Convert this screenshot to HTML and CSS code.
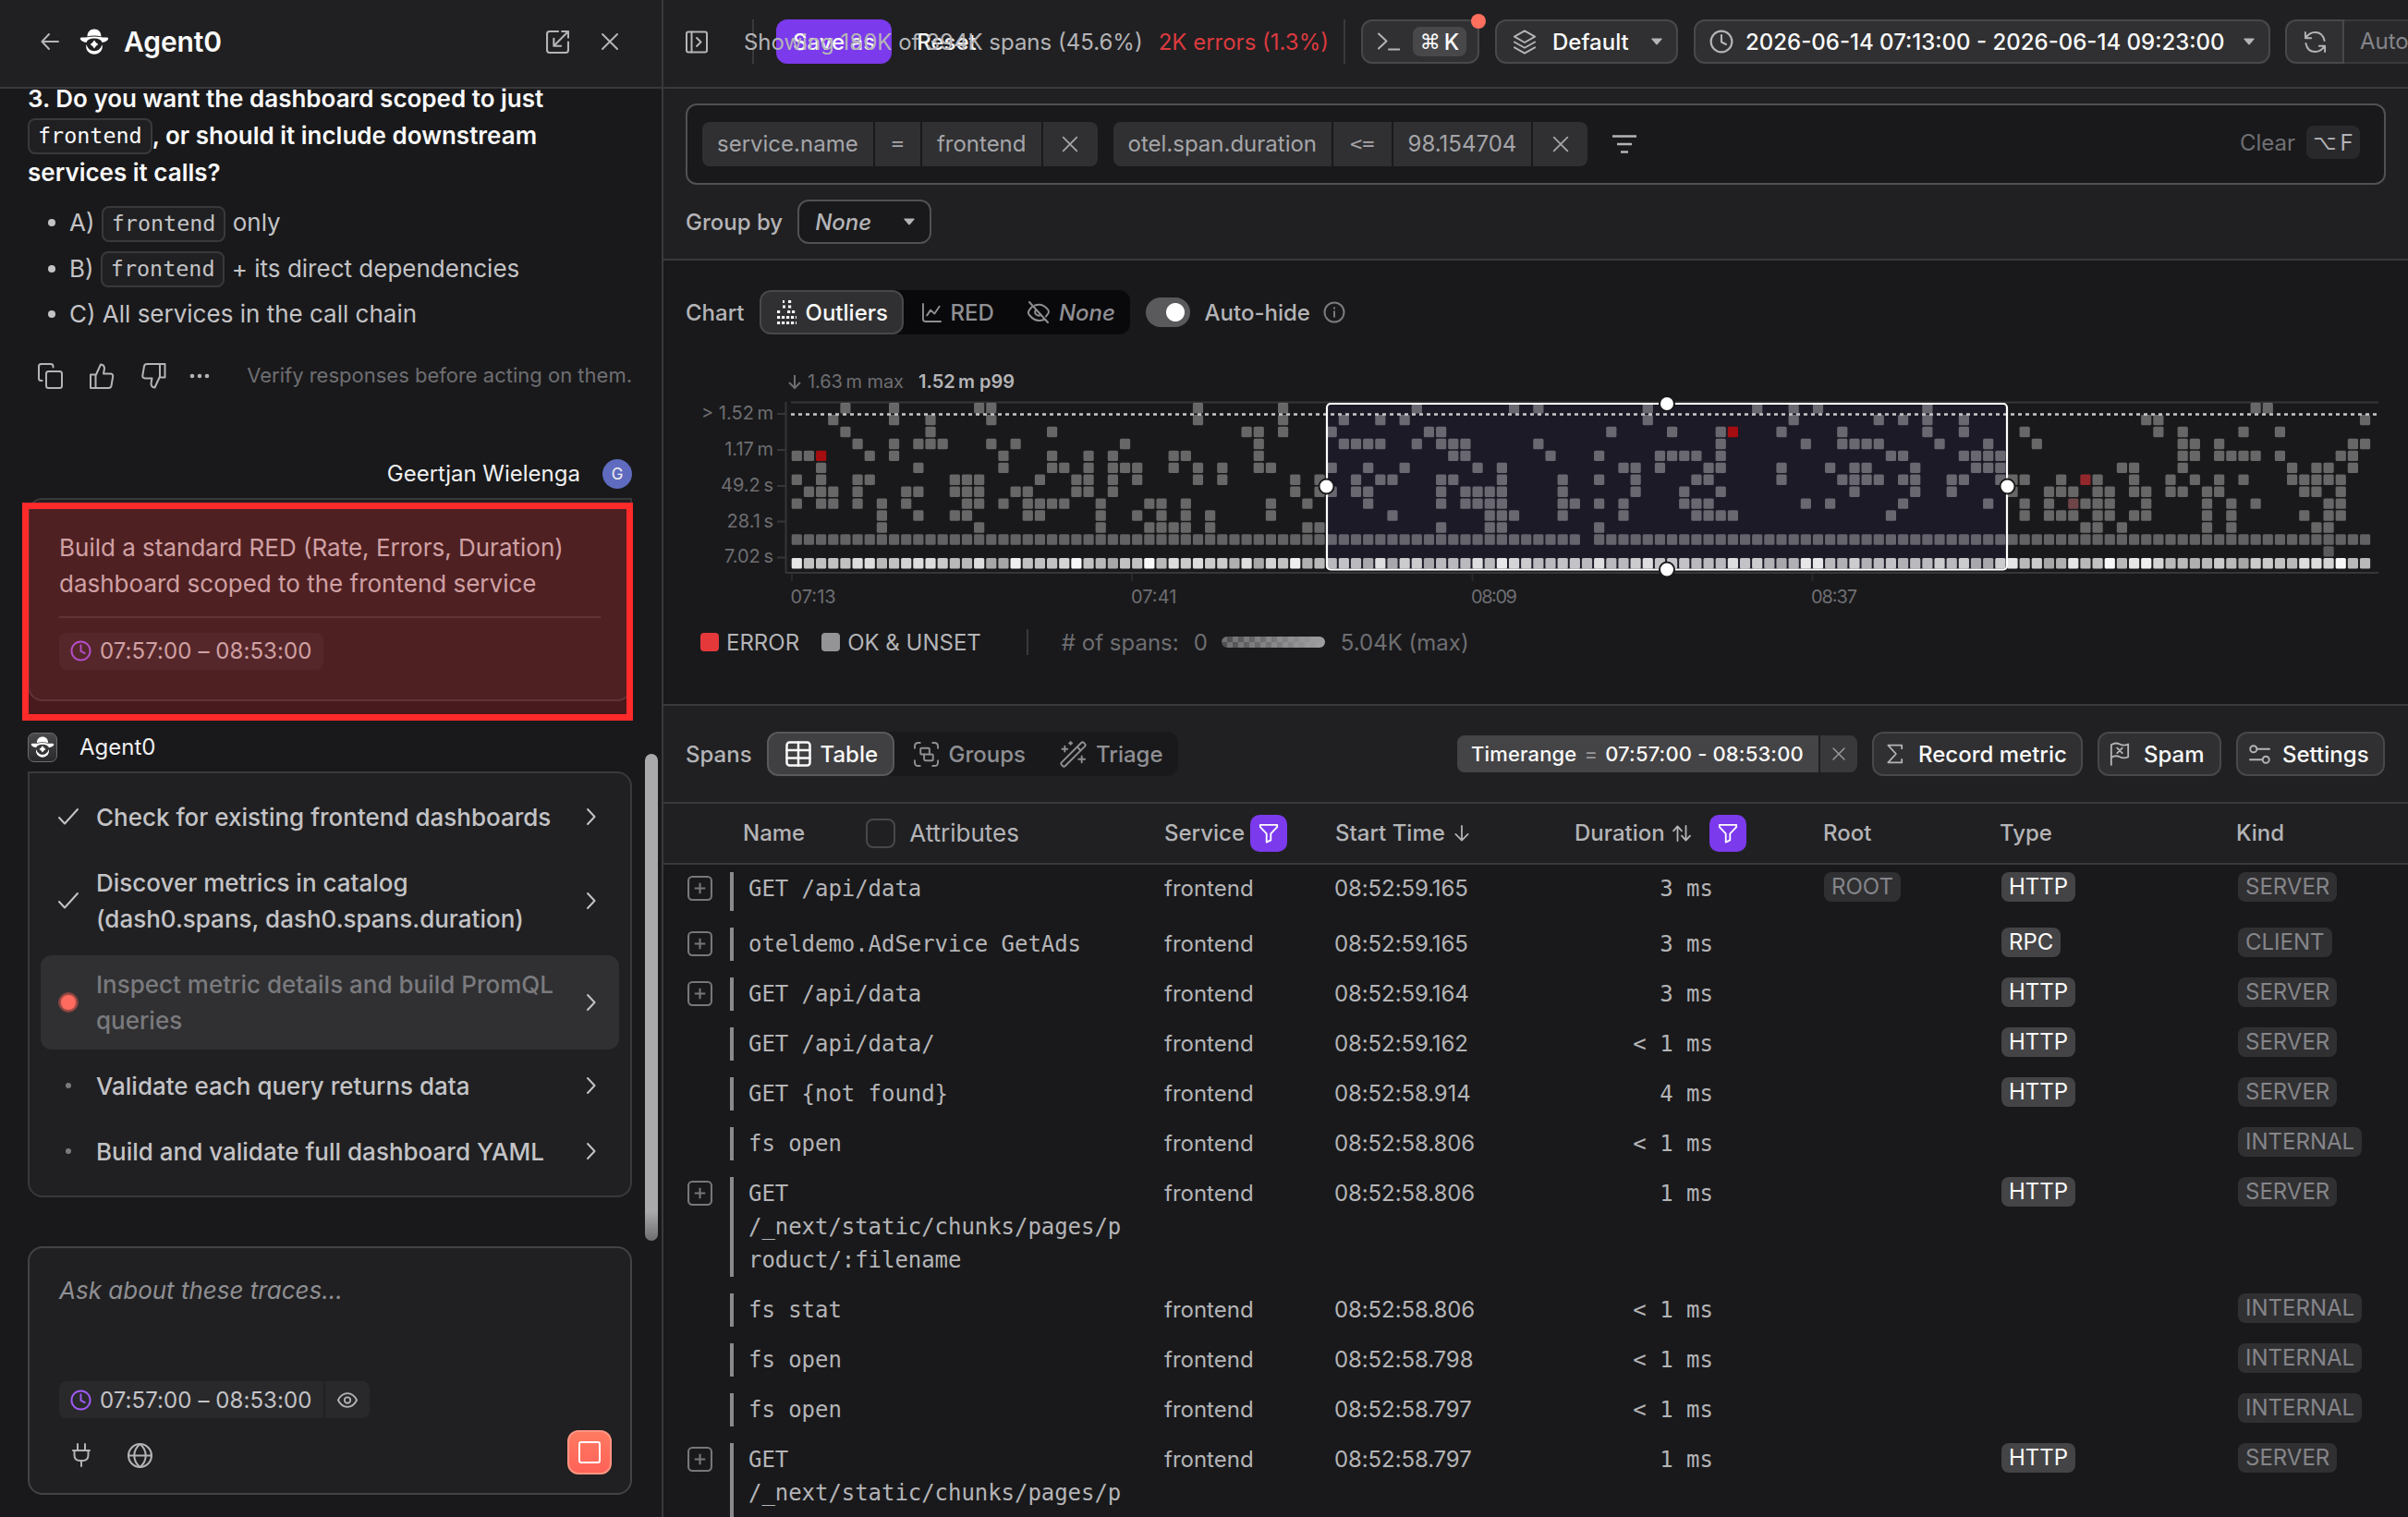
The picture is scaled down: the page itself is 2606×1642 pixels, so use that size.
FILE: index.html
```html
<!DOCTYPE html>
<html lang="en">
<head>
    <meta charset="UTF-8">
    <meta name="viewport" content="width=device-width, initial-scale=1.0">
    <title>Tracing - Agent0</title>
    <link rel="stylesheet" href="styles.css">
</head>
<body>
    <!-- shared icons -->
    <svg class="sprite" width="0" height="0">
        <symbol id="i-x" viewBox="0 0 24 24"><path d="M4 4l16 16M20 4L4 20"/></symbol>
        <symbol id="i-clock" viewBox="0 0 24 24"><circle cx="12" cy="12" r="10.5"/><path d="M12 5.5v7l4.5 2.2"/></symbol>
        <symbol id="i-chevron" viewBox="0 0 12 20"><path d="M2 2l7.5 8L2 18"/></symbol>
        <symbol id="i-check" viewBox="0 0 24 20"><path d="M2 11l6 6.5L22 2"/></symbol>
        <symbol id="i-caret" viewBox="0 0 12 8"><path d="M1 0.5h10q1 .3.5 1L6.8 7q-.8.8-1.6 0L.5 1.500q-.5-.8.5-1z"/></symbol>
        <symbol id="i-funnel" viewBox="0 0 24 24"><path d="M2 2h20v2.500l-7.500 8V20l-5 2.500v-10L2 4.500z"/></symbol>
        <symbol id="i-plus" viewBox="0 0 26 26"><rect x="1" y="1" width="24" height="24" rx="4"/><path d="M13 7.500v11M7.500 13h11"/></symbol>
        <symbol id="i-agent" viewBox="0 0 32 28">
            <path d="M8.500 8.500C8.500 3.500 11.500.500 16 .500s7.500 3 7.500 8q-7.500-1.800-15 0z"/>
            <path d="M1 11.500q-.8-2 1.500-2 3.500 0 6-.2 7.500-1.600 15 0 2.500.2 6 .2 2.300 0 1.500 2-1.500 2.700-6.500 3.500-1.300-4.500-8.500-4.500T7.500 15Q2.500 14.200 1 11.500z"/>
            <path d="M7.500 17q1.300 4.800 5 6.500 3.500 1.300 7 0 3.700-1.700 5-6.500 1 4.500-1.500 7.500-3 3.300-7 3.300t-7-3.300Q6.500 21.500 7.500 17z"/>
            <path d="M16 12.500q1.500 2.800 4.300 4.500-2.800 1.700-4.300 4.500-1.500-2.800-4.300-4.500 2.800-1.700 4.300-4.500z"/>
        </symbol>
    </svg>

    <div class="app">
        <aside class="agent">
            <header class="agent-header">
                <svg class="icon back" viewBox="0 0 20 20"><path d="M9 2L1.500 10 9 18M2 10h17"/></svg>
                <svg class="logo"><use href="#i-agent"/></svg>
                <h1>Agent0</h1>
                <svg class="icon pop-out" viewBox="0 0 24 24"><path d="M12.500 1H3.500Q1 1 1 3.500v17Q1 23 3.500 23h17q2.500 0 2.500-2.500V12M23 1L8 16M16.500 1H23v6.500M8 8.500V16h7.500"/></svg>
                <svg class="icon close"><use href="#i-x"/></svg>
            </header>

            <div class="thread">
                <div class="answer">
                    <p class="question">3. Do you want the dashboard scoped to just<br><code>frontend</code>, or should it include downstream<br>services it calls?</p>
                    <ul>
                        <li>A) <code>frontend</code> only</li>
                        <li>B) <code>frontend</code> + its direct dependencies</li>
                        <li>C) All services in the call chain</li>
                    </ul>
                </div>

                <div class="feedback">
                    <svg class="icon" viewBox="0 0 28 28"><rect x="10" y="9" width="17" height="18" rx="2.500"/><path d="M5.500 19H4.500Q2 19 2 16.500v-13Q2 1 4.500 1H15q2.500 0 2.500 2.500v1"/></svg>
                    <svg class="icon" viewBox="0 0 28 28"><path d="M2 12.500h5.500V27H2zM7.500 13.500L13 1.500q4 .3 4 4.500l-1 5.500h7.500q3 .2 2.700 3l-1.700 10q-.5 2.500-3 2.500h-14"/></svg>
                    <svg class="icon" viewBox="0 0 28 28"><path d="M26.500 15.500H21V1h5.500zM21 14.500l-5.500 12q-4-.3-4-4.500l1-5.500H5q-3-.2-2.700-3L4 3.500Q4.500 1 7 1h14"/></svg>
                    <svg class="dots" viewBox="0 0 22 6"><circle cx="3" cy="3" r="2.300"/><circle cx="11" cy="3" r="2.300"/><circle cx="19" cy="3" r="2.300"/></svg>
                    <span>Verify responses before acting on them.</span>
                </div>

                <div class="user">
                    <span>Geertjan Wielenga</span>
                    <span class="avatar">G</span>
                </div>
                <div class="message">
                    <p>Build a standard RED (Rate, Errors, Duration)<br>dashboard scoped to the frontend service</p>
                    <hr>
                    <span class="range-chip"><svg class="clock"><use href="#i-clock"/></svg>07:57:00 – 08:53:00</span>
                    <div class="highlight"></div>
                </div>

                <div class="agent-name">
                    <span class="agent-badge"><svg><use href="#i-agent"/></svg></span>
                    <span>Agent0</span>
                </div>
                <div class="steps">
                    <div class="step">
                        <svg class="icon check"><use href="#i-check"/></svg>
                        <span>Check for existing frontend dashboards</span>
                        <svg class="icon chevron"><use href="#i-chevron"/></svg>
                    </div>
                    <div class="step">
                        <svg class="icon check"><use href="#i-check"/></svg>
                        <span>Discover metrics in catalog<br>(dash0.spans, dash0.spans.duration)</span>
                        <svg class="icon chevron"><use href="#i-chevron"/></svg>
                    </div>
                    <div class="step active">
                        <i class="pulse"></i>
                        <span>Inspect metric details and build PromQL<br>queries</span>
                        <svg class="icon chevron"><use href="#i-chevron"/></svg>
                    </div>
                    <div class="step">
                        <i class="todo"></i>
                        <span>Validate each query returns data</span>
                        <svg class="icon chevron"><use href="#i-chevron"/></svg>
                    </div>
                    <div class="step">
                        <i class="todo"></i>
                        <span>Build and validate full dashboard YAML</span>
                        <svg class="icon chevron"><use href="#i-chevron"/></svg>
                    </div>
                </div>
                <div class="scrollbar"></div>
            </div>

            <div class="composer">
                <div class="placeholder">Ask about these traces...</div>
                <div class="chips">
                    <span class="range-chip"><svg class="clock"><use href="#i-clock"/></svg>07:57:00 – 08:53:00</span>
                    <span class="eye-chip"><svg class="icon" viewBox="0 0 24 18"><path d="M1 9q4-8 11-8t11 8q-4 8-11 8T1 9z"/><circle cx="12" cy="9" r="3.500"/></svg></span>
                </div>
                <div class="composer-actions">
                    <svg class="icon plug" viewBox="0 0 20 26"><path d="M6 1v7M14 1v7M1 8h18M2.500 8v5q0 6 6 6h3q6 0 6-6V8M10 19v6"/></svg>
                    <svg class="icon globe" viewBox="0 0 26 26"><circle cx="13" cy="13" r="12"/><path d="M1 13h24M13 1q-6 5-6 12t6 12q6-5 6-12T13 1z"/></svg>
                    <button class="stop"><i></i></button>
                </div>
            </div>
        </aside>

        <main>
            <header class="topbar">
                <svg class="icon panel-icon" viewBox="0 0 24 24"><rect x="1" y="1" width="22" height="22" rx="2"/><path d="M6.500 1v22M12 7.500l4.500 4.500-4.500 4.500"/></svg>
                <i class="divider first"></i>
                <button class="primary">Save as</button>
                <button class="ghost">Reset</button>
                <div class="stats"><span>Showing 180K of 394K spans (45.6%)</span><span class="errors">2K errors (1.3%)</span></div>
                <i class="divider"></i>
                <button class="btn command">
                    <svg class="icon" viewBox="0 0 24 20"><path d="M1 1.500l8.500 8L1 17.500M12 18.500h11.500"/></svg>
                    <kbd><b>⌘</b>K</kbd>
                    <i class="badge-dot"></i>
                </button>
                <button class="btn dataset">
                    <svg class="icon" viewBox="0 0 26 28"><path d="M13 1.500l11.500 6.500L13 14.500 1.500 8zM1.500 14L13 20.500 24.500 14M1.500 20L13 26.500 24.500 20"/></svg>
                    Default
                    <svg class="caret"><use href="#i-caret"/></svg>
                </button>
                <button class="btn date">
                    <svg class="icon"><use href="#i-clock"/></svg>
                    <span>2026-06-14 07:13:00 - 2026-06-14 09:23:00</span>
                    <svg class="caret"><use href="#i-caret"/></svg>
                </button>
                <button class="btn refresh">
                    <svg class="icon" viewBox="0 0 26 26"><path d="M2 2v6.500h6.500M2.500 8.500Q6 2 13 2q8.500 0 10.500 9.500M24 24v-6.500h-6.500M23.500 17.500Q20 24 13 24 4.500 24 2.500 14.500"/></svg>
                </button>
                <span class="auto">Auto</span>
            </header>

            <section class="filters">
                <div class="filter-box">
                    <div class="filter"><span>service.name</span><span class="op">=</span><span>frontend</span><span class="remove"><svg class="icon"><use href="#i-x"/></svg></span></div>
                    <div class="filter"><span>otel.span.duration</span><span class="op">&lt;=</span><span>98.154704</span><span class="remove"><svg class="icon"><use href="#i-x"/></svg></span></div>
                    <svg class="filter-icon" viewBox="0 0 26 20"><path d="M0 1.500h26M5 10h16M9 18.500h8"/></svg>
                    <div class="clear">Clear <kbd><b>⌥</b>F</kbd></div>
                </div>
                <div class="group-by">
                    <span>Group by</span>
                    <div class="select"><em>None</em><svg class="caret"><use href="#i-caret"/></svg></div>
                </div>
            </section>

            <section class="chart">
                <div class="chart-bar">
                    <span class="label">Chart</span>
                    <div class="segment dark">
                        <span class="on">
                            <svg class="outliers-icon" viewBox="0 0 24 26"><path d="M2 24.500h21M2 18.500h21M2 12.500h4M13 12.500h10M8 7h3M14 7h4M8 1.500h2M14 1.500h4" stroke-dasharray="3.200 1.800"/></svg>
                            Outliers
                        </span>
                        <span class="red-tab"><svg class="icon" viewBox="0 0 22 22"><path d="M1 1v17q0 3 3 3h17M5.500 14l4-6 4.500 4 5.500-8"/></svg>RED</span>
                        <span class="none-tab"><svg class="icon" viewBox="0 0 24 24"><path d="M2 1l20 22M8 4.500Q16 1.500 22 9q1.500 2 .5 4l-2.500 3.500M4.500 6.500Q-1 12 2 15q7 8.500 15.500 5M9 9.500q-2 3 .5 5t5 .5"/></svg><em>None</em></span>
                    </div>
                    <i class="toggle"></i>
                    <span class="label">Auto-hide</span>
                    <svg class="info" viewBox="0 0 24 24"><circle cx="12" cy="12" r="10.500"/><path d="M12 10.500v7M12 6.500v2"/></svg>
                </div>
                <svg class="heatmap" id="heatmap" viewBox="0 0 1840 270">
                    <path class="axis-text-icon" d="M118 10v14M112 18l6 6 6-6"/>
                    <text class="small" x="132" y="24" textLength="104">1.63&#8201;m max</text>
                    <text class="small strong" x="252" y="24" textLength="104">1.52&#8201;m p99</text>
                    <path class="axis" d="M114 39.500H1832M108.500 39V224M108 224H1832M99 52h9M99 91h9M99 130h9M99 168.500h9M99 207.500h9"/>
                    <path class="axis faint" d="M115 225v8M483 225v8M851.500 225v8M1219.500 225v8"/>
                    <g class="small" text-anchor="end">
                        <text x="95" y="58">&gt; 1.52&#8201;m</text>
                        <text x="95" y="97">1.17&#8201;m</text>
                        <text x="95" y="136">49.2&#8201;s</text>
                        <text x="95" y="174.500">28.1&#8201;s</text>
                        <text x="95" y="213">7.02&#8201;s</text>
                    </g>
                    <g class="small">
                        <text x="113.500" y="257">07:13</text>
                        <text x="482" y="257">07:41</text>
                        <text x="850" y="257" textLength="50">08:09</text>
                        <text x="1218" y="257" textLength="50">08:37</text>
                    </g>
                    <rect class="selected-range" x="694.500" y="41" width="736" height="179.500" rx="4"/>
                    <g id="cells"></g>
                    <path class="p99" d="M114 52.500H1830"/>
                    <rect class="selection" x="694" y="41" width="736" height="179.500" rx="4"/>
                    <g class="handles">
                        <circle cx="693.500" cy="130.500" r="8"/><circle cx="1430.500" cy="130.500" r="8"/>
                        <circle cx="1062" cy="41" r="8"/><circle cx="1062" cy="220.500" r="8"/>
                    </g>
                </svg>
                <div class="legend">
                    <i class="swatch error"></i><span>ERROR</span>
                    <i class="swatch ok"></i><span>OK &amp; UNSET</span>
                    <i class="divider"></i>
                    <span class="muted count"># of spans:</span><span class="muted">0</span><i class="scale"></i><span class="muted">5.04K (max)</span>
                </div>
            </section>

            <section class="spans-bar">
                <span class="label">Spans</span>
                <div class="segment">
                    <span class="on">
                        <svg class="icon" viewBox="0 0 28 28"><rect x="1.500" y="1.500" width="25" height="25" rx="3"/><path d="M1.500 10h25M1.500 18.500h25M14 1.500v25"/></svg>
                        Table
                    </span>
                    <span class="groups-tab"><svg class="icon" viewBox="0 0 28 28"><path d="M1 7V5q0-4 4-4h2M21 1h2q4 0 4 4v2M27 21v2q0 4-4 4h-2M7 27H5q-4 0-4-4v-2"/><rect x="7.500" y="7" width="10" height="7" rx="1"/><path d="M11.500 14v5.500q0 1.500 1.500 1.500h7.500q1 0 1-1v-5q0-1-1-1H17"/></svg>Groups</span>
                    <span class="triage-tab"><svg class="icon" viewBox="0 0 30 30"><g transform="rotate(-45 15 15)"><rect x="-2.500" y="12.200" width="35" height="5.600" rx="2"/><path d="M24 12.500v5"/></g><path d="M5.500 6v6M2.500 9h6M12 1v3M10.500 2.500h3M24.500 17v7M21 20.500h7"/></svg>Triage</span>
                </div>
                <div class="timerange"><span>Timerange <i>=</i> 07:57:00 - 08:53:00</span><span class="remove"><svg class="icon"><use href="#i-x"/></svg></span></div>
                <button class="btn record"><svg class="icon" viewBox="0 0 20 24"><path d="M18 5.500V1.500H1.500L11 12 1.500 22.500H18v-4"/></svg>Record metric</button>
                <button class="btn spam"><svg class="icon" viewBox="0 0 24 28"><path d="M2 27V3.500q5-3.500 10-1t10 0v15q-5 2.500-10 0t-10 1M9 7l6 6M15 7l-6 6"/></svg>Spam</button>
                <button class="btn settings"><svg class="icon" viewBox="0 0 24 24"><circle cx="5" cy="6" r="3.700"/><path d="M9 6h14M1 18h14"/><circle cx="19" cy="18" r="3.700"/></svg>Settings</button>
            </section>

            <section class="table">
                <div class="row head">
                    <span></span>
                    <span class="name-head">Name<i class="checkbox"></i><b class="attributes">Attributes</b></span>
                    <span>Service<b class="funnel"><svg class="icon"><use href="#i-funnel"/></svg></b></span>
                    <span>Start Time<svg class="icon sort" viewBox="0 0 18 20"><path d="M9 1v17M1.500 11L9 18.500 16.500 11"/></svg></span>
                    <span class="duration-head">Duration<svg class="icon sort both" viewBox="0 0 22 20"><path d="M6 19V2M1 7l5-5.500L11 7M16 1v17M11 13l5 5.500 5-5.500"/></svg><b class="funnel"><svg class="icon"><use href="#i-funnel"/></svg></b></span>
                    <span>Root</span>
                    <span>Type</span>
                    <span>Kind</span>
                </div>
                <div class="row first">
                    <svg class="expand"><use href="#i-plus"/></svg><code>GET /api/data</code><span>frontend</span><span>08:52:59.165</span><code class="ms">3 ms</code>
                    <span><mark>ROOT</mark></span><span><mark class="type">HTTP</mark></span><span><mark>SERVER</mark></span>
                </div>
                <div class="row">
                    <svg class="expand"><use href="#i-plus"/></svg><code>oteldemo.AdService GetAds</code><span>frontend</span><span>08:52:59.165</span><code class="ms">3 ms</code>
                    <span></span><span><mark class="type">RPC</mark></span><span><mark>CLIENT</mark></span>
                </div>
                <div class="row">
                    <svg class="expand"><use href="#i-plus"/></svg><code>GET /api/data</code><span>frontend</span><span>08:52:59.164</span><code class="ms">3 ms</code>
                    <span></span><span><mark class="type">HTTP</mark></span><span><mark>SERVER</mark></span>
                </div>
                <div class="row">
                    <i></i><code>GET /api/data/</code><span>frontend</span><span>08:52:59.162</span><code class="ms">&lt; 1 ms</code>
                    <span></span><span><mark class="type">HTTP</mark></span><span><mark>SERVER</mark></span>
                </div>
                <div class="row">
                    <i></i><code>GET {not found}</code><span>frontend</span><span>08:52:58.914</span><code class="ms">4 ms</code>
                    <span></span><span><mark class="type">HTTP</mark></span><span><mark>SERVER</mark></span>
                </div>
                <div class="row">
                    <i></i><code>fs open</code><span>frontend</span><span>08:52:58.806</span><code class="ms">&lt; 1 ms</code>
                    <span></span><span></span><span><mark>INTERNAL</mark></span>
                </div>
                <div class="row">
                    <svg class="expand"><use href="#i-plus"/></svg><code>GET<br>/_next/static/chunks/pages/p<br>roduct/:filename</code><span>frontend</span><span>08:52:58.806</span><code class="ms">1 ms</code>
                    <span></span><span><mark class="type">HTTP</mark></span><span><mark>SERVER</mark></span>
                </div>
                <div class="row">
                    <i></i><code>fs stat</code><span>frontend</span><span>08:52:58.806</span><code class="ms">&lt; 1 ms</code>
                    <span></span><span></span><span><mark>INTERNAL</mark></span>
                </div>
                <div class="row">
                    <i></i><code>fs open</code><span>frontend</span><span>08:52:58.798</span><code class="ms">&lt; 1 ms</code>
                    <span></span><span></span><span><mark>INTERNAL</mark></span>
                </div>
                <div class="row">
                    <i></i><code>fs open</code><span>frontend</span><span>08:52:58.797</span><code class="ms">&lt; 1 ms</code>
                    <span></span><span></span><span><mark>INTERNAL</mark></span>
                </div>
                <div class="row last">
                    <svg class="expand"><use href="#i-plus"/></svg><code>GET<br>/_next/static/chunks/pages/p</code><span>frontend</span><span>08:52:58.797</span><code class="ms">1 ms</code>
                    <span></span><span><mark class="type">HTTP</mark></span><span><mark>SERVER</mark></span>
                </div>
            </section>
        </main>
    </div>

    <script>
        // One column per minute, 07:13 - 09:23
        const COLUMNS = 130;
        const STEP_X = 13.157;
        const STEP_Y = 12.93;

        // Columns that have spans, per duration bucket (top = slowest)
        const buckets = [
            [4,8,15,16,33,40,51,59,61,70,79,82,84,93,120,121],
            [3,8,11,16,33,40,45,48,50,70,82,89,91,93,96,111,112,129],
            [4,11,21,37,38,40,44,52,53,67,72,76,77,81,86,93,96,101,112,114,119,122],
            [5,8,10,11,12,16,18,27,38,45,46,47,48,51,53,54,55,61,76,83,86,87,88,89,94,98,102,114,115,117,128,129],
            [0,1,2,6,8,17,21,24,26,31,32,38,54,55,62,66,71,72,73,74,76,90,91,96,97,98,99,114,115,117,118,119,120,122,127,128],
            [2,10,17,21,22,24,26,27,28,31,33,35,38,39,44,47,50,56,58,68,69,71,75,76,81,85,87,88,92,97,98,99,109,110,114,123,125,126,128],
            [0,2,5,6,13,14,15,20,23,24,26,28,33,35,41,43,46,48,49,53,54,58,63,66,69,74,75,81,86,87,88,89,91,92,95,96,99,100,101,104,106,107,110,113,115,117,119,123,124,125,126,127],
            [1,2,3,5,9,10,13,14,15,18,19,23,24,26,41,43,44,46,47,53,55,56,57,58,63,69,73,76,87,92,95,100,103,104,105,107,108,110,111,113,114,116,117,124,125,127],
            [0,2,3,5,7,9,14,15,17,19,20,21,22,25,29,30,32,39,42,47,53,55,56,57,58,63,64,66,68,73,74,75,83,85,91,98,101,103,105,106,107,108,111,116,118,120,126,127],
            [7,10,13,14,19,20,25,28,30,32,34,39,49,57,58,59,63,68,74,75,76,77,90,101,103,104,105,107,108,110,111,116,118,124,126,127],
            [7,15,25,29,30,31,32,34,42,43,53,57,58,66,106,107,109,116,118,125,126]
        ];
        // column/row -> colour of the buckets with errors
        const errors = { '2/4': '#a60d10', '77/2': '#a60d10', '106/6': '#93282c', '105/8': '#6f4547' };
        // brightness of the fastest bucket
        const fastest = '7333366235664226008333593203392646441605381223206044022262754223326224' +
            '633322263410177214123122424004724017239278522124204432665922';

        const cells = document.getElementById('cells');

        function cell(col, row, fill) {
            const rect = document.createElementNS('http://www.w3.org/2000/svg', 'rect');
            rect.setAttribute('x', (114.7 + col * STEP_X).toFixed(2));
            rect.setAttribute('y', (40 + row * STEP_Y).toFixed(2));
            rect.setAttribute('width', 11.2);
            rect.setAttribute('height', 11.4);
            rect.setAttribute('rx', 1.5);
            rect.setAttribute('fill', fill);
            cells.appendChild(rect);
        }

        buckets.forEach((cols, row) => {
            cols.forEach(col => cell(col, row, errors[col + '/' + row] || 'rgba(255, 255, 255, 0.34)'));
        });
        for (let col = 0; col < COLUMNS; col++) {
            if (col !== 65) cell(col, 11, 'rgba(255, 255, 255, 0.32)');
            const level = (168 + Number(fastest[col]) * 9) / 255;
            cell(col, 13, `rgba(255, 255, 255, ${(level - 0.1) / 0.9})`);
        }
        cell(126, 12, '#5a5a5c');
    </script>
</body>
</html>
```

FILE: styles.css
```css
* {
    margin: 0;
    padding: 0;
    box-sizing: border-box;
}

body {
    font-family: Inter, "Liberation Sans", sans-serif;
    font-size: 24px;
    color: #b4b4b7;
    background: #19191b;
    height: 1642px;
    overflow: hidden;
}

button {
    font: inherit;
    border: none;
}

code {
    font-family: "DejaVu Sans Mono", "Liberation Mono", monospace;
}

.sprite {
    position: absolute;
}

.icon {
    fill: none;
    stroke: currentColor;
    stroke-width: 2;
    stroke-linecap: round;
    stroke-linejoin: round;
    flex: none;
}

.caret {
    width: 12px;
    height: 8px;
    fill: #b4b4b7;
    flex: none;
}

.app {
    display: grid;
    grid-template-columns: 718px 1888px;
    height: 1642px;
}

/* Agent panel */
.agent {
    display: flex;
    flex-direction: column;
    border-right: 2px solid #39393c;
    min-height: 0;
}

.agent-header {
    height: 96px;
    flex: none;
    display: flex;
    align-items: center;
    padding: 0 44px 4px 44px;
    background: #202022;
    border-bottom: 2px solid #39393c;
}

.back {
    width: 20px;
    height: 20px;
}

.logo {
    width: 32px;
    height: 28px;
    fill: #fff;
    margin: 0 16px 0 22px;
}

h1 {
    font-size: 30px;
    font-weight: 600;
    letter-spacing: -0.1px;
    color: #fafafa;
}

.pop-out {
    width: 25px;
    height: 25px;
    margin-left: auto;
    margin-right: 32px;
}

.close {
    width: 24px;
    height: 24px;
}

.thread {
    position: relative;
    height: 1199px;
    padding: 0 32px 0 30px;
    font-size: 26px;
    line-height: 39px;
}

.answer {
    color: #c3c3c6;
    line-height: 39.500px;
}

.question {
    font-weight: 600;
    color: #fafafa;
    margin-top: -9px;
}

.answer code {
    display: inline-block;
    height: 39px;
    line-height: 35px;
    font-size: 23.400px;
    font-weight: 400;
    padding: 0 9px;
    background: #202022;
    border: 2px solid #39393c;
    border-radius: 8px;
    vertical-align: middle;
    margin-top: -2px;
}

.answer ul {
    list-style: none;
    margin-top: 15px;
}

.answer li {
    height: 39.500px;
    margin-bottom: 10px;
    padding-left: 45px;
    position: relative;
    white-space: nowrap;
}

.answer li::before {
    content: "";
    position: absolute;
    left: 22px;
    top: 16px;
    width: 8px;
    height: 8px;
    border-radius: 50%;
    background: #c3c3c6;
}

.feedback {
    display: flex;
    align-items: center;
    height: 40px;
    margin-top: 27px;
    padding-left: 10px;
    font-size: 22px;
    color: #6e6e72;
}

.feedback .icon {
    width: 28px;
    height: 28px;
    margin-right: 28px;
    color: #b4b4b7;
}

.feedback .dots {
    width: 22px;
    height: 6px;
    fill: #b4b4b7;
    margin-left: -3px;
}

.feedback span {
    margin-left: auto;
    white-space: nowrap;
}

.user {
    display: flex;
    align-items: center;
    justify-content: flex-end;
    gap: 24px;
    height: 40px;
    margin-top: 66px;
    color: #f0f0f1;
    font-size: 24px;
}

.avatar {
    width: 32px;
    height: 32px;
    border-radius: 50%;
    background: #5f6bbf;
    text-align: center;
    font-size: 17px;
    line-height: 32px;
}

.message {
    position: relative;
    height: 220px;
    margin-top: 6px;
    padding: 32px 32px 0 32px;
    background: #202022;
    border: 2px solid #39393c;
    border-radius: 16px 0 16px 16px;
    color: #c3c3c6;
}

.message p {
    white-space: nowrap;
}

.message hr {
    border: none;
    height: 2px;
    background: #39393c;
    margin: 16px 0;
}

.range-chip {
    display: inline-flex;
    align-items: center;
    width: 286px;
    height: 40px;
    padding-left: 12px;
    gap: 9px;
    font-size: 24px;
    letter-spacing: 0.080px;
    color: #c3c3c6;
    background: #29292c;
    border-radius: 8px;
    white-space: nowrap;
}

.clock {
    width: 23px;
    height: 23px;
    fill: none;
    stroke: #9f5bf5;
    stroke-width: 2;
    stroke-linecap: round;
}

.highlight {
    position: absolute;
    left: -8px;
    top: 3px;
    width: 661px;
    height: 236px;
    border: 7px solid #ff2a2a;
    background: rgba(255, 35, 40, 0.21);
    z-index: 2;
}

.agent-name {
    display: flex;
    align-items: center;
    gap: 24px;
    height: 40px;
    margin-top: 30px;
    font-size: 24px;
    color: #f0f0f1;
}

.agent-badge {
    width: 32px;
    height: 32px;
    border: 1px solid #6c6c6f;
    border-radius: 7px;
    background: linear-gradient(#4a4a4c, #29292b);
    display: flex;
    align-items: center;
    justify-content: center;
}

.agent-badge svg {
    width: 26px;
    height: 23px;
    fill: #fff;
}

.steps {
    display: flex;
    flex-direction: column;
    gap: 8px;
    height: 461px;
    margin-top: 6px;
    padding: 16px 12px;
    background: #202022;
    border: 2px solid #39393c;
    border-radius: 0 16px 16px 16px;
    color: #c3c3c6;
    font-weight: 500;
}

.step {
    display: flex;
    align-items: center;
    padding: 12px 24px 12px 18px;
    white-space: nowrap;
}

.step.active {
    background: #303032;
    border-radius: 12px;
    color: #7a7a7e;
}

.step .icon {
    color: #c3c3c6;
}

.step .check {
    width: 24px;
    height: 20px;
    margin-right: 18px;
}

.step .chevron {
    width: 12px;
    height: 20px;
    margin-left: auto;
}

.pulse {
    width: 20px;
    height: 20px;
    margin: 0 20px 0 2px;
    border-radius: 50%;
    background: #ff6b5e;
    border: 2px solid #a34c47;
    outline: 1px solid #8b4440;
}

.todo {
    width: 6px;
    height: 6px;
    margin: 0 27px 0 9px;
    border-radius: 50%;
    background: #7a7a7e;
}

.scrollbar {
    position: absolute;
    left: 698px;
    top: 720px;
    width: 14px;
    height: 527px;
    border-radius: 7px;
    background: linear-gradient(#a9a9ab 94%, #6d6d6f);
}

.composer {
    flex: none;
    height: 269px;
    margin: 54px 32px 0 30px;
    padding: 26px 20px 0 32px;
    background: #202022;
    border: 2px solid #434346;
    border-radius: 16px;
}

.placeholder {
    height: 118px;
    font-size: 26px;
    line-height: 39px;
    font-style: italic;
    color: #8f8f93;
}

.chips {
    display: flex;
    gap: 2px;
}

.chips .range-chip {
    border-radius: 8px 0 0 8px;
}

.eye-chip {
    width: 48px;
    height: 40px;
    display: flex;
    align-items: center;
    justify-content: center;
    background: #29292c;
    border-radius: 0 8px 8px 0;
}

.eye-chip .icon {
    width: 22px;
    height: 17px;
}

.composer-actions {
    display: flex;
    align-items: flex-start;
    padding: 13px 0 0 14px;
}

.plug {
    width: 20px;
    height: 26px;
    margin-top: 14px;
}

.globe {
    width: 27px;
    height: 27px;
    margin: 14px 0 0 40px;
}

.stop {
    width: 48px;
    height: 48px;
    margin-left: auto;
    border-radius: 12px;
    border: 2px solid #ff9482;
    background: linear-gradient(#ff7a61, #ff6258);
    display: flex;
    align-items: center;
    justify-content: center;
}

.stop i {
    width: 24px;
    height: 24px;
    border: 2px solid #fff;
    border-radius: 3px;
}

/* Main area */
main {
    min-width: 0;
    overflow: hidden;
}

.topbar {
    height: 96px;
    display: flex;
    align-items: center;
    padding: 0 0 4px 24px;
    background: #202022;
    border-bottom: 2px solid #39393c;
    white-space: nowrap;
}

.topbar > * {
    flex: none;
}

.panel-icon {
    width: 24px;
    height: 25px;
}

.divider {
    width: 2px;
    height: 48px;
    background: #39393c;
}

.divider.first {
    margin: 0 24px 0 48px;
}

.primary,
.ghost {
    width: 125px;
    height: 48px;
    border-radius: 12px;
    font-weight: 500;
    color: #fafafa;
    background: #7c3aed;
}

.ghost {
    width: 101px;
    margin-left: 9px;
    background: none;
}

.stats {
    display: flex;
    justify-content: flex-end;
    gap: 17px;
    width: 363px;
    margin-right: 16px;
    color: #b4b4b7;
}

.stats .errors {
    color: #dc3a3f;
}

.btn {
    display: flex;
    align-items: center;
    height: 48px;
    font-weight: 500;
    color: #fafafa;
    background: #303032;
    border: 2px solid #48484b;
    border-radius: 12px;
    white-space: nowrap;
    flex: none;
}

.btn .icon {
    color: #b4b4b7;
}

.command {
    position: relative;
    width: 128px;
    margin-left: 17px;
    padding-left: 16px;
}

.command .icon {
    width: 24px;
    height: 20px;
    margin-right: 14px;
}

kbd {
    font-family: inherit;
    background: #48484b;
    border-radius: 8px;
    height: 32px;
    width: 58px;
    display: flex;
    align-items: center;
    justify-content: center;
    gap: 4px;
}

kbd b {
    font-family: "DejaVu Sans", sans-serif;
    font-weight: 400;
    font-size: 22px;
}

.badge-dot {
    position: absolute;
    right: -9px;
    top: -8px;
    width: 16px;
    height: 16px;
    border-radius: 50%;
    background: #ff6f5e;
}

.dataset {
    width: 198px;
    margin-left: 17px;
    padding-left: 17px;
}

.dataset .icon {
    width: 26px;
    height: 27px;
    margin-right: 17px;
}

.dataset .caret,
.date .caret {
    margin-left: auto;
    margin-right: 15px;
}

.date {
    width: 624px;
    margin-left: 17px;
    padding-left: 15px;
}

.date .icon {
    width: 26px;
    height: 26px;
    margin-right: 13px;
}

.refresh {
    width: 64px;
    margin-left: 16px;
    justify-content: center;
    border-radius: 12px 0 0 12px;
}

.refresh .icon {
    width: 25px;
    height: 25px;
}

.auto {
    width: 120px;
    height: 48px;
    line-height: 44px;
    padding-left: 17px;
    border: 2px solid #39393c;
    border-left: none;
    background: #29292b;
    color: #85858a;
}

.filters {
    height: 186px;
    padding: 16px 24px 0 24px;
    background: #202022;
    border-bottom: 2px solid #39393c;
}

.filter-box {
    height: 88px;
    display: flex;
    align-items: center;
    gap: 17px;
    padding: 0 26px 0 16px;
    background: #19191b;
    border: 2px solid #515154;
    border-radius: 12px;
}

.filter {
    display: flex;
    gap: 2px;
    height: 48px;
    line-height: 48px;
    color: #a5a5a9;
    border-radius: 8px;
    overflow: hidden;
}

.filter span {
    padding: 0 16px;
    background: #303032;
}

.filter .op {
    font-family: "DejaVu Sans Mono", monospace;
    font-size: 22px;
    padding: 0 18px;
}

.filter .remove {
    width: 59px;
    padding: 0;
    display: flex;
    align-items: center;
    justify-content: center;
}

.filter .remove .icon {
    width: 22px;
    height: 22px;
}

.filter-icon {
    width: 26px;
    height: 20px;
    margin-left: 10px;
    fill: none;
    stroke: #b4b4b7;
    stroke-width: 2.500;
}

.clear {
    display: flex;
    align-items: center;
    gap: 12px;
    margin: -4px 0 0 auto;
    color: #707074;
}

.clear kbd {
    height: 36px;
    background: #29292b;
    color: #b4b4b7;
}

.group-by {
    display: flex;
    align-items: center;
    gap: 16px;
    margin-top: 16px;
    font-weight: 500;
}

.select {
    display: flex;
    align-items: center;
    justify-content: space-between;
    width: 145px;
    height: 48px;
    padding: 0 16px 0 17px;
    background: #19191b;
    border: 2px solid #515154;
    border-radius: 12px;
}

/* Chart */
.chart {
    height: 480px;
    padding: 32px 24px 0;
}

.chart-bar {
    display: flex;
    align-items: center;
    height: 48px;
    font-weight: 500;
}

.label {
    font-weight: 500;
}

.segment {
    display: flex;
    height: 48px;
    margin-left: 16px;
    background: #19191b;
    border-radius: 12px;
    color: #8f8f93;
    font-weight: 500;
}

.segment.dark {
    width: 401px;
    background: #09090b;
}

.segment > span {
    display: flex;
    align-items: center;
}

.segment .on {
    width: 156px;
    padding-left: 15px;
    gap: 9px;
    color: #fafafa;
    background: #303032;
    border: 2px solid #48484b;
    border-radius: 12px;
}

.outliers-icon {
    width: 24px;
    height: 26px;
    fill: none;
    stroke: #fafafa;
    stroke-width: 3;
}

.red-tab {
    gap: 10px;
    margin-left: 20px;
}

.red-tab .icon {
    width: 21px;
    height: 21px;
}

.none-tab {
    gap: 10px;
    margin-left: 36px;
}

.none-tab .icon {
    width: 24px;
    height: 24px;
}

.toggle {
    width: 48px;
    height: 32px;
    margin: 0 16px 0 17px;
    border-radius: 16px;
    background: radial-gradient(circle at 32px 16px, #fff 9.500px, #5a5a5d 10.500px);
}

.info {
    width: 24px;
    height: 24px;
    margin-left: 14px;
    fill: none;
    stroke: #7a7a7e;
    stroke-width: 2;
}

.heatmap {
    display: block;
    width: 1840px;
    height: 270px;
    margin-top: 34px;
}

.small {
    font-size: 20px;
    fill: #6e6e72;
}

.strong {
    font-weight: 600;
    fill: #b4b4b7;
}

.axis-text-icon {
    fill: none;
    stroke: #6e6e72;
    stroke-width: 2;
}

.axis {
    fill: none;
    stroke: #363638;
    stroke-width: 2;
}

.axis.faint {
    stroke: #29292b;
}

.p99 {
    stroke: #c9c9cb;
    stroke-width: 2.500;
    stroke-dasharray: 4 4;
}

.selected-range {
    fill: #1c1a26;
}

.selection {
    fill: none;
    stroke: #fff;
    stroke-width: 2.200;
}

.handles circle {
    fill: #fff;
    stroke: #19191b;
    stroke-width: 2;
}

.legend {
    display: flex;
    align-items: center;
    height: 28px;
    margin-top: 15px;
    padding-left: 16px;
}

.swatch {
    width: 20px;
    height: 20px;
    border-radius: 4px;
    margin-right: 8px;
}

.swatch.error {
    background: #e5383b;
}

.swatch.ok {
    background: #949496;
    margin-left: 24px;
}

.legend .divider {
    height: 28px;
    margin: 0 36px 0 49px;
}

.legend .muted {
    color: #6e6e72;
}

.legend .count {
    margin-right: 16px;
}

.scale {
    width: 112px;
    height: 12px;
    margin: 0 17px 0 15px;
    border-radius: 6px;
    background:
        linear-gradient(90deg, rgba(150, 150, 152, 0.1), #a0a0a2),
        repeating-conic-gradient(#444446 0 25%, #6a6a6c 0 50%) 0 0 / 12px 12px;
}

/* Spans toolbar */
.spans-bar {
    display: flex;
    align-items: center;
    height: 106px;
    padding: 0 25px 0 24px;
    background: #202022;
    border-top: 2px solid #39393c;
}

.spans-bar .segment {
    width: 445px;
}

.spans-bar .segment .on {
    width: 138px;
    padding-left: 18px;
    gap: 10px;
    background: #404042;
    border-color: #59595c;
}

.segment .on .icon {
    width: 28px;
    height: 28px;
    stroke-width: 2.500;
}

.groups-tab {
    gap: 11px;
    margin-left: 21px;
}

.groups-tab .icon {
    width: 27px;
    height: 27px;
}

.triage-tab {
    gap: 10px;
    margin-left: 37px;
}

.triage-tab .icon {
    width: 29px;
    height: 29px;
}

.timerange {
    display: flex;
    gap: 2px;
    height: 40px;
    margin-left: auto;
    font-size: 22px;
    font-weight: 500;
    letter-spacing: 0.150px;
    line-height: 40px;
    color: #fafafa;
    border-radius: 8px;
    overflow: hidden;
    white-space: nowrap;
}

.timerange span {
    width: 391px;
    padding-left: 15px;
    background: #444446;
}

.timerange i {
    margin: 0 2px;
    font-style: normal;
    font-weight: 400;
    color: #98989b;
}

.timerange .remove {
    width: 40px;
    padding: 0;
    background: #39393b;
    color: #98989b;
    display: flex;
    align-items: center;
    justify-content: center;
}

.timerange .icon {
    width: 18px;
    height: 18px;
}

.record,
.spam,
.settings {
    margin-left: 16px;
    padding: 0 0 0 14px;
}

.record {
    width: 228px;
}

.record .icon {
    width: 18px;
    height: 22px;
    margin-right: 16px;
}

.spam {
    width: 134px;
    padding-left: 11px;
}

.spam .icon {
    width: 22px;
    height: 26px;
    margin-right: 15px;
}

.settings {
    width: 161px;
    padding-left: 12px;
}

.settings .icon {
    width: 23px;
    height: 23px;
    margin-right: 13px;
}

/* Table */
.row {
    display: grid;
    grid-template-columns: 72px 470px 185px 255px 154px 192px 256px 184px;
    padding: 9px 0;
    line-height: 36px;
    color: #b4b4b7;
}

.row.first {
    padding-top: 8px;
}

.row.first > code:nth-child(2) {
    padding-bottom: 6px;
}

.row.last > code:nth-child(2) {
    padding-bottom: 36px;
}

.row > code:nth-child(2) {
    border-left: 4px solid #8a8a8d;
    padding-left: 16px;
    letter-spacing: -0.050px;
}

.row > span:nth-child(4) {
    letter-spacing: -0.100px;
    margin-left: -1px;
}

.expand {
    width: 27px;
    height: 27px;
    margin: 4px 0 0 26px;
    fill: none;
    stroke: #77777b;
    stroke-width: 2;
}

.ms {
    text-align: right;
    white-space: pre;
}

.row > :nth-child(6) {
    padding-left: 120px;
    width: 312px;
}

.row > :nth-child(7) {
    margin-left: 120px;
}

.row > :nth-child(8) {
    margin-left: 120px;
    white-space: nowrap;
}

mark {
    display: block;
    width: max-content;
    height: 32px;
    padding: 0 8px;
    line-height: 31px;
    color: #85858a;
    background: #303032;
    border-radius: 8px;
}

mark.type {
    color: #fafafa;
    background: #444446;
}

.head {
    height: 68px;
    padding: 0;
    align-items: center;
    background: #202022;
    border-top: 2px solid #39393c;
    border-bottom: 2px solid #39393c;
    font-weight: 500;
}

.head span {
    display: flex;
    align-items: center;
}

.row.head > span:nth-child(4) {
    letter-spacing: 0;
    margin-left: 0;
}

.head > :nth-child(6) {
    padding-left: 119px;
}

.head > :nth-child(7),
.head > :nth-child(8) {
    margin-left: 118px;
}

.head .name-head {
    padding-left: 14px;
}

.checkbox {
    width: 32px;
    height: 32px;
    margin: 0 15px 0 66px;
    border: 2px solid #48484b;
    border-radius: 8px;
}

.attributes {
    font-size: 26px;
    font-weight: 400;
}

.funnel {
    width: 40px;
    height: 40px;
    margin-left: 6px;
    border-radius: 10px;
    background: #7c3aed;
    color: #fff;
    display: flex;
    align-items: center;
    justify-content: center;
}

.funnel .icon {
    width: 22px;
    height: 22px;
}

.sort {
    width: 16px;
    height: 18px;
    margin-left: 10px;
}

.sort.both {
    width: 20px;
    margin-left: 8px;
}

.head .duration-head {
    padding-left: 4px;
    width: 200px;
}

.duration-head .funnel {
    margin-left: 20px;
    flex: none;
}
```
